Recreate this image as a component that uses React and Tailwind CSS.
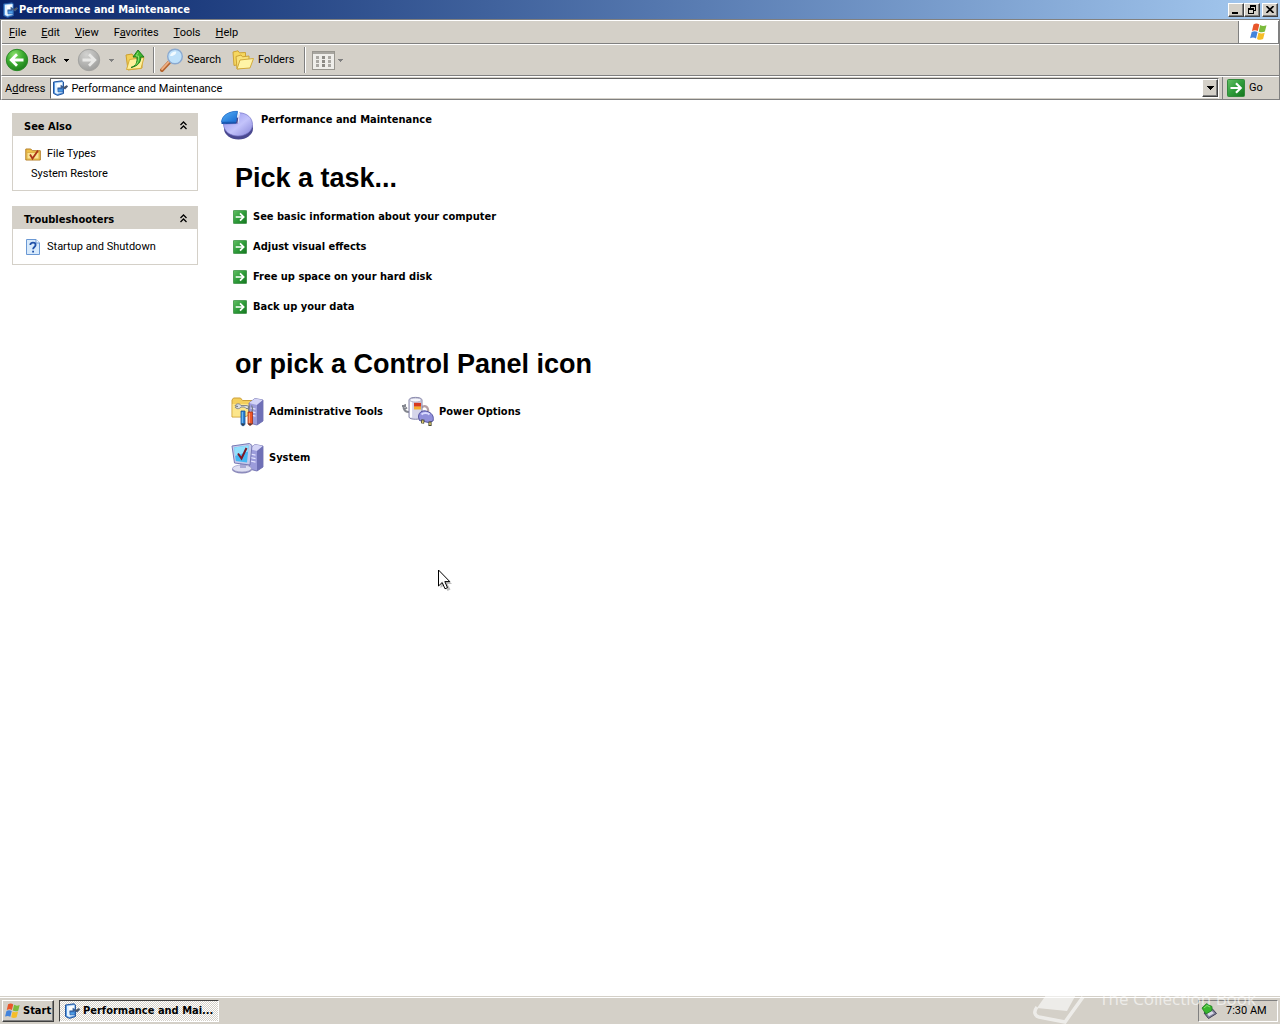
import React from 'react';

const raised = 'border border-t-white border-l-white border-r-[#404040] border-b-[#404040] shadow-[inset_-1px_-1px_0_#808080]';

const menus = [
  { key: 'F', before: '', after: 'ile' },
  { key: 'E', before: '', after: 'dit' },
  { key: 'V', before: '', after: 'iew' },
  { key: 'a', before: 'F', after: 'vorites' },
  { key: 'T', before: '', after: 'ools' },
  { key: 'H', before: '', after: 'elp' },
];

const tasks = [
  'See basic information about your computer',
  'Adjust visual effects',
  'Free up space on your hard disk',
  'Back up your data',
];

const PageIcon = () => (
  <svg viewBox="0 0 16 16" className="h-4 w-4 shrink-0" aria-hidden="true">
    <path d="M1.500 2 10 .8l1.500 1.200v11.500l-6 1.900-4-2z" fill="#5b9ae0" stroke="#24569f" />
    <path d="M3 2.800 10.500 2v10.500L5 14l-2-1.200z" fill="#e4f3ff" />
    <path d="M5 3.500 9.500 3v3.500L5 8z" fill="#fff" />
    <path d="M5.500 8.500h4V6.300l3.500 2 2.500-2.500" fill="none" stroke="#3b5f94" strokeWidth="1.800" />
    <path d="M6 8.800h5v3H6z" fill="#4fa0e8" stroke="#2c62ad" strokeWidth=".8" />
    <path d="m12 8 3-2" stroke="#51565e" strokeWidth="2" />
  </svg>
);

const WindowsFlag = ({ className }) => (
  <svg viewBox="0 0 20 18" className={className} aria-hidden="true">
    <path d="M4.500 1.500C6.500.3 8.500.3 10.300 1.600L8.800 8C7 6.800 5 6.900 3 7.900z" fill="#e8562a" />
    <path d="M11.200 2.100c2 1.200 4 1.200 6.300.1L15.900 8.600c-2.200 1-4.200.9-6.200-.2z" fill="#7cba3c" />
    <path d="M2.700 8.900c2-1 4-1 5.900.2L7 15.500c-1.900-1.200-3.900-1.200-5.900-.2z" fill="#4384dc" />
    <path d="M9.500 9.500c2 1.200 4 1.200 6.200.2L14.100 16c-2.200 1.100-4.200 1-6.100-.1z" fill="#f5bd28" />
  </svg>
);

const GreenArrow = ({ className }) => (
  <svg viewBox="0 0 18 18" className={className} aria-hidden="true">
    <defs>
      <linearGradient id="go" x1="0" y1="0" x2="1" y2="1">
        <stop offset="0" stopColor="#64c064" />
        <stop offset=".5" stopColor="#2f9c3a" />
        <stop offset="1" stopColor="#14751f" />
      </linearGradient>
    </defs>
    <rect x=".5" y=".5" width="17" height="17" rx="1" fill="url(#go)" stroke="#348a3c" />
    <path d="M3.500 9h10M9 4.300 13.700 9 9 13.700" fill="none" stroke="#fff" strokeWidth="2.200" />
  </svg>
);

const RoundArrow = ({ forward }) => (
  <svg viewBox="0 0 24 24" className="h-6 w-6 shrink-0" aria-hidden="true">
    <defs>
      <radialGradient id="backFill" cx=".38" cy=".25" r=".8">
        <stop offset="0" stopColor="#8be06c" />
        <stop offset=".5" stopColor="#3cab30" />
        <stop offset="1" stopColor="#1c7a1c" />
      </radialGradient>
      <radialGradient id="fwdFill" cx=".38" cy=".25" r=".8">
        <stop offset="0" stopColor="#d2d2d0" />
        <stop offset="1" stopColor="#9c9c9a" />
      </radialGradient>
    </defs>
    <circle cx="12" cy="12" r="10.700" fill={forward ? 'url(#fwdFill)' : 'url(#backFill)'} stroke={forward ? '#a3a3a0' : '#2a8a26'} />
    <path
      d={forward ? 'M5.500 12h12M12 6.200 17.800 12 12 17.800' : 'M18.500 12h-12M12 6.200 6.200 12l5.800 5.800'}
      fill="none"
      stroke={forward ? '#e9e9e7' : '#fff'}
      strokeWidth="2.800"
    />
  </svg>
);

const UpFolder = () => (
  <svg viewBox="0 0 20 22" className="h-[22px] w-5 shrink-0" aria-hidden="true">
    <path d="M1 6 7 5l1.500 2H17v12L3 21z" fill="#f2cf58" stroke="#cda02d" />
    <path d="m1.500 20.500 3-10 14.500-2-3 11z" fill="#fdf09c" stroke="#d6ac3a" />
    <path d="M6 18.500c5-1.500 6.500-5 6-10.500H8L13 1l6 7h-3.300c.4 5-2.700 9-9.700 10.500z" fill="#3fb62e" stroke="#1d7d1c" />
    <path d="M13 3.500 11 7h2.500c.4 4-.5 7-3 9" fill="none" stroke="#8fe06e" />
  </svg>
);

const SearchIcon = () => (
  <svg viewBox="0 0 24 24" className="h-6 w-6 shrink-0" aria-hidden="true">
    <path d="m9.500 14-7.500 8" stroke="#b5642e" strokeWidth="4" strokeLinecap="round" />
    <path d="m9 13.700-7 7.500" stroke="#f0b084" strokeWidth="1.800" strokeLinecap="round" />
    <circle cx="15" cy="8.500" r="7.300" fill="#bfe1fa" stroke="#8ba9cf" strokeWidth="1.400" />
    <path d="M10 8c.5-3 2.500-4.500 6-4.500 1 2-2 5-6 4.500z" fill="#f2fbff" />
  </svg>
);

const FoldersIcon = () => (
  <svg viewBox="0 0 22 20" className="h-5 w-[22px] shrink-0" aria-hidden="true">
    <path d="M1 2 6 .8l1.500 2 6-.3V13L2 15.500z" fill="#f6d75f" stroke="#cda336" />
    <path d="M4 6.500 9 5l1.500 1.800L17 6v11L5 19z" fill="#f9e27a" stroke="#cda336" />
    <path d="m5 19 3-9 13.500-1.500L18 18z" fill="#fff4a6" stroke="#d3aa3c" />
  </svg>
);

const ViewsIcon = () => (
  <svg viewBox="0 0 23 19" className="h-[19px] w-[23px] shrink-0" aria-hidden="true">
    <rect x=".5" y=".5" width="22" height="18" fill="#efeeea" stroke="#98968f" />
    <path d="M1 2h21" stroke="#a8a6a0" strokeWidth="2" />
    {[4, 10, 16].map((x) => [5, 9, 13].map((y) => (
      <rect key={`${x}-${y}`} x={x} y={y} width="3" height="3" fill={x === 10 ? '#8d8b86' : '#aaa8a3'} />
    )))}
  </svg>
);

const Caret = ({ className }) => (
  <svg viewBox="0 0 5 3" className={`h-[3px] w-[5px] shrink-0 ${className}`} shapeRendering="crispEdges" aria-hidden="true">
    <path d="M0 0h5L2.500 3z" fill="currentColor" />
  </svg>
);

const PieIcon = () => (
  <svg viewBox="0 0 34 30" className="h-[30px] w-[34px] shrink-0" aria-hidden="true">
    <defs>
      <linearGradient id="pie" x1="0" y1="0" x2="1" y2="1">
        <stop offset="0" stopColor="#8f8eec" />
        <stop offset=".55" stopColor="#c3c3fb" />
        <stop offset="1" stopColor="#8685d8" />
      </linearGradient>
      <linearGradient id="slice" x1="0" y1="0" x2="1" y2="1">
        <stop offset="0" stopColor="#5ab4f8" />
        <stop offset="1" stopColor="#1668d0" />
      </linearGradient>
    </defs>
    <ellipse cx="18.500" cy="18.500" rx="14.500" ry="11" fill="#4a4990" />
    <path d="M18 13.500 19.500 2.800C27 3 32.500 8 32.500 14.500 32.500 21 26 26 18 26S3.500 21 3.500 14z" fill="url(#pie)" stroke="#7776c8" strokeWidth=".7" />
    <path d="M1.500 12C2 5.500 8.500 1.200 17.500 1.300L16 12v1.500L1.500 14z" fill="#1453ad" />
    <path d="M1.500 12C2 5.500 8.500 1.200 17.500 1.300L16 11.700z" fill="url(#slice)" stroke="#256fca" strokeWidth=".7" />
    <path d="M18 13.500 19.500 3" stroke="#eeeeff" />
  </svg>
);

const FileTypesIcon = () => (
  <svg viewBox="0 0 16 16" className="h-4 w-4 shrink-0" aria-hidden="true">
    <path d="M.8 3h5l1.500 1.700h8V14H.8z" fill="#efc04a" stroke="#b5802b" />
    <path d="M2 6.500h12V13H2z" fill="#fbe493" stroke="#dfb34a" />
    <path d="m5 8.500 2.500 4L13 4.500" fill="none" stroke="#ab3417" strokeWidth="1.800" />
  </svg>
);

const HelpIcon = () => (
  <svg viewBox="0 0 16 16" className="h-4 w-4 shrink-0" aria-hidden="true">
    <path d="M1.500.5h9.500l3.500 3.500v11.500h-13z" fill="#d8eafb" stroke="#6a98d4" />
    <path d="M11 .5V4h3.500" fill="#fff" stroke="#6a98d4" />
    <path d="M5.300 6c0-3.200 5.300-3.100 5.300 0 0 2-2.500 2-2.500 4.300" fill="none" stroke="#1f50a8" strokeWidth="1.800" />
    <path d="M7.200 11.700H9v1.800H7.200z" fill="#1f50a8" />
  </svg>
);

const Tower = () => (
  <g>
    <path d="m18 7 6-4.500 8 1.500v21l-6 4-8-2z" fill="#9c9cdb" stroke="#6868a8" strokeWidth=".8" />
    <path d="m18 7 6-4.500 8 1.500-6 5z" fill="#d4d4f6" />
    <path d="m26 9 6-5v21l-6 4z" fill="#6f70b6" />
    <path d="m19.500 12 5 1.200M19.500 15.500l5 1.200M19.500 19l5 1.200" stroke="#e6e6ff" strokeWidth="1.200" />
  </g>
);

const AdminIcon = () => (
  <svg viewBox="0 0 34 32" className="h-8 w-[34px] shrink-0" aria-hidden="true">
    <path d="M1 4 2.500 2h7l2 2.500H21V18l-8 3H1z" fill="#f4cf5c" stroke="#cda039" />
    <path d="M1.500 8h19v10l-8 2.500h-11z" fill="#fce68c" />
    <Tower />
    <path d="M4 9.500c2-2.500 5-2 6 0h5c2 0 3 1 3 3h-3l-1.500-1.500H10c-1.500 2.500-5 2-6 0l3-.5z" fill="#d9dde4" stroke="#6c727c" strokeWidth=".8" />
    <path d="M18.500 17c-1-3-2-5 0-7.500M20.500 17c1.500-3 1.500-5 0-7.500" stroke="#787c84" fill="none" strokeWidth="1.300" />
    <path d="M10 15h4v13.500l-2 1.500-2-1.500z" fill="#2b82d6" stroke="#164f93" strokeWidth=".8" />
    <path d="M11.300 16v11" stroke="#7fc5f7" />
    <path d="M17 16h4.500v12L19 29.500 17 28z" fill="#ee5728" stroke="#a62f14" strokeWidth=".8" />
    <path d="M18.300 17v10" stroke="#ffad7d" />
    <path d="M10 27.500h4l-2 2.500zM17 27.500h4.500L19 29.500z" fill="#3b3e46" />
  </svg>
);

const PowerIcon = () => (
  <svg viewBox="0 0 34 32" className="h-8 w-[34px] shrink-0" aria-hidden="true">
    <path d="M8 16C2 16 1 9 5 9M1 10h4M2.500 14 6 11.500" fill="none" stroke="#83868e" strokeWidth="2" />
    <path d="M20 12c4-4 8-1 7 5" fill="none" stroke="#b4a0a6" strokeWidth="2.200" />
    <path d="M8 4c0-3.500 13-3.500 13 0v17c0 3-13 3-13 0z" fill="#d6d6ea" stroke="#8585a8" />
    <path d="M10 4v17.500" stroke="#fff" strokeWidth="2.200" />
    <ellipse cx="14.500" cy="4" rx="6" ry="2" fill="#f4f4fb" stroke="#9b9bb8" strokeWidth=".7" />
    <path d="M13 6.800h7v4h-7z" fill="#d73820" />
    <path d="M13 10.500h7v3h-7z" fill="#f5ab2c" />
    <path d="M17.500 21c0-6 6-7.500 10-5 4.500 1.500 5.500 6 4.500 9l-4.500 1.500-9-2z" fill="#908fda" stroke="#5554a0" />
    <path d="M20.500 18.500c2-2 6-2 8 0" fill="none" stroke="#dadaff" strokeWidth="2" />
    <path d="m22 23.500-.5 4M29 25.500V30" stroke="#4a4937" strokeWidth="3.200" />
    <path d="m22 24.500-.5 2.500M29 26.500V29" stroke="#dfcd6a" strokeWidth="1.500" />
  </svg>
);

const SystemIcon = () => (
  <svg viewBox="0 0 34 32" className="h-8 w-[34px] shrink-0" aria-hidden="true">
    <Tower />
    <ellipse cx="11" cy="27.500" rx="10" ry="4" fill="#8987b9" />
    <ellipse cx="11" cy="26.500" rx="9.500" ry="3.500" fill="#dfdff2" stroke="#9a9ac4" strokeWidth=".7" />
    <path d="m9 20 6 1v5H9z" fill="#a9a9d4" />
    <path d="M1 4 18.500 1.500l2.500 2-2 19.500L3.500 21z" fill="#c6c9ea" stroke="#7779b5" />
    <path d="m3.200 5.500 14.500-2-1.700 17L4.800 19z" fill="#46b8f2" />
    <path d="m3.200 5.500 14.500-2-.6 6L4 14z" fill="#92e0fc" />
    <path d="m7 11.500 3.500 5L15.500 6" fill="none" stroke="#7c1826" strokeWidth="2" />
  </svg>
);

const TrayIcon = () => (
  <svg viewBox="0 0 16 16" className="h-4 w-4 shrink-0" aria-hidden="true">
    <path d="m3 10 8-4.500 4.500 5L7.500 15.500z" fill="#83839c" stroke="#3e3e54" />
    <path d="m6 10.500 4.500-2.700 2.500 2.500-5 3z" fill="#d9d9e8" />
    <path d="M1 5 5.500.7 11 3.500v4L5 11 2.500 7.500z" fill="#39b62f" stroke="#1b7a1c" strokeWidth=".8" />
    <path d="m3 5 3-2.500L9 4" fill="none" stroke="#8be073" />
  </svg>
);

const SidePanel = ({ title, children }) => (
  <section className="border border-[#d4d0c8] bg-white">
    <div className="flex h-[22px] items-center justify-between bg-[#d4d0c8] pt-1 pr-[9px] pl-[11px]">
      <h2 className="font-['DejaVu_Sans_Condensed'] font-bold">{title}</h2>
      <button type="button" aria-label={`Collapse ${title}`} className="pb-1">
        <svg viewBox="0 0 9 9" className="h-[9px] w-[9px]" aria-hidden="true">
          <path d="m1.500 4 3-3 3 3M1.500 8l3-3 3 3" fill="none" stroke="#000" strokeWidth="1.300" />
        </svg>
      </button>
    </div>
    <div className="flex flex-col gap-[5px] px-3 pt-[10px] pb-[9px]">{children}</div>
  </section>
);

const Grip = () => <div className="h-[26px] w-[2px] shrink-0 border-l border-[#808080] bg-white" />;

const TitleBar = () => (
  <header className="flex h-[19px] items-center bg-linear-to-r from-[#0a246a] to-[#a6caf0] px-[2px]">
    <PageIcon />
    <h1 className="ml-px flex-1 font-['DejaVu_Sans_Condensed'] font-bold text-white">Performance and Maintenance</h1>
    <button type="button" aria-label="Minimize" className={`flex h-[14px] w-4 items-end bg-[#d4d0c8] pb-[2px] pl-[3px] ${raised}`}>
      <span className="h-[2px] w-[6px] bg-black" />
    </button>
    <button type="button" aria-label="Restore" className={`flex h-[14px] w-4 items-center justify-center bg-[#d4d0c8] ${raised}`}>
      <svg viewBox="0 0 9 9" className="h-[9px] w-[9px]" shapeRendering="crispEdges" aria-hidden="true">
        <path d="M2 0h6v6H6V5h1V2H3v1H2zM0 3h6v6H0zm1 2v3h4V5z" fillRule="evenodd" />
      </svg>
    </button>
    <button type="button" aria-label="Close" className={`ml-[2px] flex h-[14px] w-4 items-center justify-center bg-[#d4d0c8] ${raised}`}>
      <svg viewBox="0 0 8 7" className="h-[7px] w-2" aria-hidden="true">
        <path d="m.5 0 7 7M7.500 0l-7 7" stroke="#000" strokeWidth="1.600" />
      </svg>
    </button>
  </header>
);

const MenuBar = () => (
  <div className="flex h-6 border-t border-l border-white">
    <nav className="flex flex-1 items-center gap-[15px] border-r border-b border-[#808080] pt-[2px] pl-[7px]">
      {menus.map((m) => (
        <button type="button" key={m.key}>
          {m.before}<u>{m.key}</u>{m.after}
        </button>
      ))}
    </nav>
    <div className="flex w-10 items-center justify-center border-r border-b border-[#808080] bg-white">
      <WindowsFlag className="h-[18px] w-5" />
    </div>
  </div>
);

const Toolbar = () => (
  <div className="flex h-8 items-center border-t border-l border-white border-b border-b-[#808080] pl-[3px]">
    <button type="button" className="flex items-center gap-[3px]"><RoundArrow />Back</button>
    <button type="button" aria-label="Back history" className="px-2"><Caret className="text-black" /></button>
    <button type="button" aria-label="Forward"><RoundArrow forward /></button>
    <button type="button" aria-label="Forward history" className="px-2"><Caret className="text-[#808080]" /></button>
    <button type="button" aria-label="Up" className="mr-2 ml-[3px]"><UpFolder /></button>
    <Grip />
    <button type="button" className="ml-[5px] flex items-center gap-[3px]"><SearchIcon />Search</button>
    <button type="button" className="mr-[10px] ml-[11px] flex items-center gap-1"><FoldersIcon />Folders</button>
    <Grip />
    <button type="button" aria-label="Views" className="ml-[6px] flex items-center gap-[3px]">
      <ViewsIcon /><Caret className="text-[#808080]" />
    </button>
  </div>
);

const AddressBar = () => (
  <form className="flex h-6 items-center border-t border-l border-white border-b border-b-[#808080] pl-[3px]" onSubmit={(e) => e.preventDefault()}>
    <label htmlFor="address" className="mr-[5px] pt-px">A<u>d</u>dress</label>
    <div className="flex h-[21px] flex-1 items-center border border-t-[#606060] border-r-white border-b-[#d4d0c8] border-l-[#606060] bg-white pl-px">
      <PageIcon />
      <input id="address" defaultValue="Performance and Maintenance" className="ml-[3px] min-w-0 flex-1 pt-[2px] outline-none" />
      <button type="button" aria-label="Show addresses" className={`flex h-[18px] w-4 items-center justify-center bg-[#d4d0c8] ${raised}`}>
        <svg viewBox="0 0 7 4" className="h-1 w-[7px]" shapeRendering="crispEdges" aria-hidden="true"><path d="M0 0h7L3.500 4z" /></svg>
      </button>
    </div>
    <div className="ml-[3px] h-full w-px bg-[#808080]" />
    <button type="submit" className="flex w-14 items-center gap-1 pl-1">
      <GreenArrow className="h-[18px] w-[18px] shrink-0" />Go
    </button>
  </form>
);

const PanelLink = ({ icon, label }) => (
  <a href="#" className="flex items-center gap-1 font-['DejaVu_Sans_Condensed'] font-bold">
    {icon}{label}
  </a>
);

const Taskbar = () => (
  <footer className="relative flex h-[27px] items-center border-t border-white bg-[#d4d0c8] px-[2px] shadow-[0_-1px_0_#d4d0c8]">
    <button type="button" className={`flex h-[22px] w-[52px] items-center gap-px pl-px font-['DejaVu_Sans_Condensed'] font-bold ${raised}`}>
      <WindowsFlag className="h-4 w-[18px] shrink-0" />Start
    </button>
    <button type="button" className="ml-[5px] flex h-[22px] w-40 items-center gap-[3px] border border-t-[#404040] border-r-white border-b-white border-l-[#404040] bg-[repeating-conic-gradient(#fff_0_25%,#d4d0c8_0_50%)] bg-[length:2px_2px] pl-1 font-['DejaVu_Sans_Condensed'] font-bold">
      <PageIcon />
      <span className="truncate">Performance and Mai...</span>
    </button>
    <div className="ml-auto flex h-[22px] w-20 items-center border border-t-[#808080] border-r-white border-b-white border-l-[#808080] pl-[2px]">
      <TrayIcon />
      <time className="ml-[9px]">7:30 AM</time>
    </div>
    <div className="pointer-events-none absolute right-6 bottom-0 flex h-11 items-center gap-3 overflow-hidden text-white opacity-60">
      <svg viewBox="0 0 54 44" className="h-11 w-[54px]" aria-hidden="true">
        <path d="M4 28 22 2h28L34 31z" fill="#fff" />
        <path d="M4 27c-4 5-2 9 2 10l26 5 18-25" fill="none" stroke="#fff" strokeWidth="3.500" />
      </svg>
      <span className="pb-[6px] font-['Open_Sans'] text-[17px]">The Collection Book</span>
    </div>
  </footer>
);

const Cursor = () => (
  <svg viewBox="0 0 16 24" className="pointer-events-none absolute top-[569px] left-[437px] h-6 w-4" aria-hidden="true">
    <path d="M3.500 3v16l4-3 3 6 3-1.500-3-5.500h4.500z" fill="#000" opacity=".25" />
    <path d="M1.500 1v16l3.700-3.500 2.800 6.300 2.500-1.200-2.700-6h5z" fill="#fff" stroke="#000" />
  </svg>
);

export default function App() {
  return (
    <div className="relative flex min-h-screen flex-col bg-white font-['Roboto',sans-serif] text-[11px] leading-[14px] text-black">
      <TitleBar />
      <div className="border-t border-r border-l border-[#808080] bg-[#d4d0c8]">
        <MenuBar />
        <Toolbar />
        <AddressBar />
      </div>

      <div className="flex flex-1">
        <aside className="ml-3 flex w-[186px] shrink-0 flex-col gap-[15px] pt-[13px]">
          <SidePanel title="See Also">
            <a href="#" className="flex items-center gap-[6px]"><FileTypesIcon />File Types</a>
            <a href="#" className="pl-[6px]">System Restore</a>
          </SidePanel>
          <SidePanel title="Troubleshooters">
            <a href="#" className="flex items-center gap-[6px]"><HelpIcon />Startup and Shutdown</a>
          </SidePanel>
        </aside>

        <main className="ml-[22px] flex-1 pt-[10px]">
          <div className="flex items-start gap-[7px]">
            <PieIcon />
            <h2 className="pt-[3px] font-['DejaVu_Sans_Condensed'] font-bold">Performance and Maintenance</h2>
          </div>

          <h2 className="mt-5 ml-[15px] font-['Liberation_Sans'] text-[27px] leading-9 font-bold">Pick a task...</h2>
          <ul className="mt-[14px] ml-[13px] flex flex-col gap-4 font-['DejaVu_Sans_Condensed'] font-bold">
            {tasks.map((task) => (
              <li key={task}>
                <a href="#" className="flex items-center gap-[6px]">
                  <GreenArrow className="h-[14px] w-[14px] shrink-0" />
                  {task}
                </a>
              </li>
            ))}
          </ul>

          <h2 className="mt-8 ml-[15px] font-['Liberation_Sans'] text-[27px] leading-9 font-bold">or pick a Control Panel icon</h2>
          <div className="mt-[14px] ml-[11px] grid grid-cols-[170px_170px] gap-y-[14px]">
            <PanelLink icon={<AdminIcon />} label="Administrative Tools" />
            <PanelLink icon={<PowerIcon />} label="Power Options" />
            <PanelLink icon={<SystemIcon />} label="System" />
          </div>
        </main>
      </div>

      <Taskbar />
      <Cursor />
    </div>
  );
}
